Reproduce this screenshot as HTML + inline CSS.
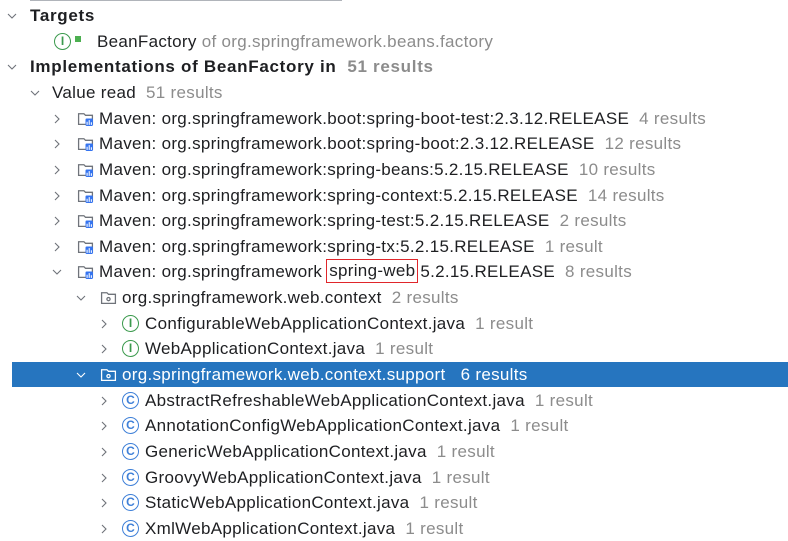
<!DOCTYPE html><html><head><style>
body{margin:0;width:788px;height:540px;background:#fff;overflow:hidden;position:relative;font-family:"Liberation Sans",sans-serif;font-size:17px;letter-spacing:0.3px;color:#1e1f22}
.r{position:absolute;left:0;height:25px;line-height:25px;white-space:nowrap;width:788px}
.g{color:#8c8c8c}
.b{font-weight:bold;letter-spacing:0.7px}
.ic{position:absolute;top:4px;width:17px;height:17px;border-radius:50%;box-sizing:border-box;font-size:12px;line-height:14px;text-align:center;font-weight:bold;letter-spacing:0}
.I{border:1.5px solid #3b9a4d;color:#3b9a4d}
.C{border:1.5px solid #3f80d8;color:#3f80d8}
.t{position:absolute;top:0}
.box{display:inline-block;border:1.5px solid #e0262b;height:22px;line-height:22px;vertical-align:top;margin-left:4px;margin-right:2px;padding:0 2px}
</style></head><body>
<div style="position:absolute;left:30px;top:0;width:312px;height:1px;background:#b0b4ba"></div>
<svg width="0" height="0" style="position:absolute"><defs>
<symbol id="mv" viewBox="0 0 16 16"><path d="M1.5 3.5h5l1.5 1.5h6.5v8.5h-13z" fill="none" stroke="#6f737a" stroke-width="1.2"/><rect x="8" y="8" width="7" height="7" rx="1" fill="#3574f0"/><path d="M9.5 14v-3M11.5 14v-4.5M13.5 14v-2.5" stroke="#fff" stroke-width="1"/></symbol>
<symbol id="pk" viewBox="0 0 16 16"><path d="M1.5 3.5h5l1.5 1.5h6.5v8.5h-13z" fill="none" stroke="currentColor" stroke-width="1.2"/><circle cx="8" cy="9.5" r="1.5" fill="none" stroke="currentColor" stroke-width="1.2"/></symbol>
<symbol id="ch" viewBox="0 0 10 10"><path d="M1 3l4 4 4-4" fill="none" stroke="currentColor" stroke-width="1.1"/></symbol>
<symbol id="cr" viewBox="0 0 10 10"><path d="M3 1l4 4-4 4" fill="none" stroke="currentColor" stroke-width="1.1"/></symbol>
</defs></svg>

<div class="r" style="top:3px"><svg class="t" style="left:7px;top:8px;color:#6f737a" width="10" height="10"><use href="#ch"/></svg><span class="t b" style="left:30px">Targets</span></div>
<div class="r" style="top:29px"><span class="ic I" style="left:54px">I</span><span class="t" style="left:75px;top:7px;width:6px;height:6px;background:#4caf50"></span><span class="t" style="left:97px">BeanFactory <span class="g">of org.springframework.beans.factory</span></span></div>
<div class="r" style="top:54px"><svg class="t" style="left:7px;top:8px;color:#6f737a" width="10" height="10"><use href="#ch"/></svg><span class="t b" style="left:30px">Implementations of BeanFactory in &nbsp;<span class="g">51 results</span></span></div>
<div class="r" style="top:80px"><svg class="t" style="left:30px;top:8px;color:#6f737a" width="10" height="10"><use href="#ch"/></svg><span class="t" style="left:52px">Value read &nbsp;<span class="g">51 results</span></span></div>

<div class="r" style="top:106px"><svg class="t" style="left:52px;top:8px;color:#6f737a" width="10" height="10"><use href="#cr"/></svg><svg class="t" style="left:77px;top:4px" width="17" height="17"><use href="#mv"/></svg><span class="t" style="left:99px">Maven: org.springframework.boot:spring-boot-test:2.3.12.RELEASE &nbsp;<span class="g">4 results</span></span></div>
<div class="r" style="top:131px"><svg class="t" style="left:52px;top:8px;color:#6f737a" width="10" height="10"><use href="#cr"/></svg><svg class="t" style="left:77px;top:4px" width="17" height="17"><use href="#mv"/></svg><span class="t" style="left:99px">Maven: org.springframework.boot:spring-boot:2.3.12.RELEASE &nbsp;<span class="g">12 results</span></span></div>
<div class="r" style="top:157px"><svg class="t" style="left:52px;top:8px;color:#6f737a" width="10" height="10"><use href="#cr"/></svg><svg class="t" style="left:77px;top:4px" width="17" height="17"><use href="#mv"/></svg><span class="t" style="left:99px">Maven: org.springframework:spring-beans:5.2.15.RELEASE &nbsp;<span class="g">10 results</span></span></div>
<div class="r" style="top:183px"><svg class="t" style="left:52px;top:8px;color:#6f737a" width="10" height="10"><use href="#cr"/></svg><svg class="t" style="left:77px;top:4px" width="17" height="17"><use href="#mv"/></svg><span class="t" style="left:99px">Maven: org.springframework:spring-context:5.2.15.RELEASE &nbsp;<span class="g">14 results</span></span></div>
<div class="r" style="top:208px"><svg class="t" style="left:52px;top:8px;color:#6f737a" width="10" height="10"><use href="#cr"/></svg><svg class="t" style="left:77px;top:4px" width="17" height="17"><use href="#mv"/></svg><span class="t" style="left:99px">Maven: org.springframework:spring-test:5.2.15.RELEASE &nbsp;<span class="g">2 results</span></span></div>
<div class="r" style="top:234px"><svg class="t" style="left:52px;top:8px;color:#6f737a" width="10" height="10"><use href="#cr"/></svg><svg class="t" style="left:77px;top:4px" width="17" height="17"><use href="#mv"/></svg><span class="t" style="left:99px">Maven: org.springframework:spring-tx:5.2.15.RELEASE &nbsp;<span class="g">1 result</span></span></div>
<div class="r" style="top:259px"><svg class="t" style="left:52px;top:8px;color:#6f737a" width="10" height="10"><use href="#ch"/></svg><svg class="t" style="left:77px;top:4px" width="17" height="17"><use href="#mv"/></svg><span class="t" style="left:99px">Maven: org.springframework<span class="box">spring-web</span>5.2.15.RELEASE &nbsp;<span class="g">8 results</span></span></div>

<div class="r" style="top:285px"><svg class="t" style="left:76px;top:8px;color:#6f737a" width="10" height="10"><use href="#ch"/></svg><svg class="t" style="left:100px;top:4px;color:#6f737a" width="17" height="17"><use href="#pk"/></svg><span class="t" style="left:122px">org.springframework.web.context &nbsp;<span class="g">2 results</span></span></div>
<div class="r" style="top:311px"><svg class="t" style="left:99px;top:8px;color:#6f737a" width="10" height="10"><use href="#cr"/></svg><span class="ic I" style="left:122px">I</span><span class="t" style="left:145px">ConfigurableWebApplicationContext.java &nbsp;<span class="g">1 result</span></span></div>
<div class="r" style="top:336px"><svg class="t" style="left:99px;top:8px;color:#6f737a" width="10" height="10"><use href="#cr"/></svg><span class="ic I" style="left:122px">I</span><span class="t" style="left:145px">WebApplicationContext.java &nbsp;<span class="g">1 result</span></span></div>
<div class="r" style="top:362px;left:12px;width:776px;background:#2675bf;color:#fff"><svg class="t" style="left:64px;top:8px;color:#fff" width="10" height="10"><use href="#ch"/></svg><svg class="t" style="left:88px;top:4px;color:#fff" width="17" height="17"><use href="#pk"/></svg><span class="t" style="left:110px">org.springframework.web.context.support &nbsp;&nbsp;6 results</span></div>
<div class="r" style="top:388px"><svg class="t" style="left:99px;top:8px;color:#6f737a" width="10" height="10"><use href="#cr"/></svg><span class="ic C" style="left:122px">C</span><span class="t" style="left:145px">AbstractRefreshableWebApplicationContext.java &nbsp;<span class="g">1 result</span></span></div>
<div class="r" style="top:413px"><svg class="t" style="left:99px;top:8px;color:#6f737a" width="10" height="10"><use href="#cr"/></svg><span class="ic C" style="left:122px">C</span><span class="t" style="left:145px">AnnotationConfigWebApplicationContext.java &nbsp;<span class="g">1 result</span></span></div>
<div class="r" style="top:439px"><svg class="t" style="left:99px;top:8px;color:#6f737a" width="10" height="10"><use href="#cr"/></svg><span class="ic C" style="left:122px">C</span><span class="t" style="left:145px">GenericWebApplicationContext.java &nbsp;<span class="g">1 result</span></span></div>
<div class="r" style="top:465px"><svg class="t" style="left:99px;top:8px;color:#6f737a" width="10" height="10"><use href="#cr"/></svg><span class="ic C" style="left:122px">C</span><span class="t" style="left:145px">GroovyWebApplicationContext.java &nbsp;<span class="g">1 result</span></span></div>
<div class="r" style="top:490px"><svg class="t" style="left:99px;top:8px;color:#6f737a" width="10" height="10"><use href="#cr"/></svg><span class="ic C" style="left:122px">C</span><span class="t" style="left:145px">StaticWebApplicationContext.java &nbsp;<span class="g">1 result</span></span></div>
<div class="r" style="top:516px"><svg class="t" style="left:99px;top:8px;color:#6f737a" width="10" height="10"><use href="#cr"/></svg><span class="ic C" style="left:122px">C</span><span class="t" style="left:145px">XmlWebApplicationContext.java &nbsp;<span class="g">1 result</span></span></div>
</body></html>
